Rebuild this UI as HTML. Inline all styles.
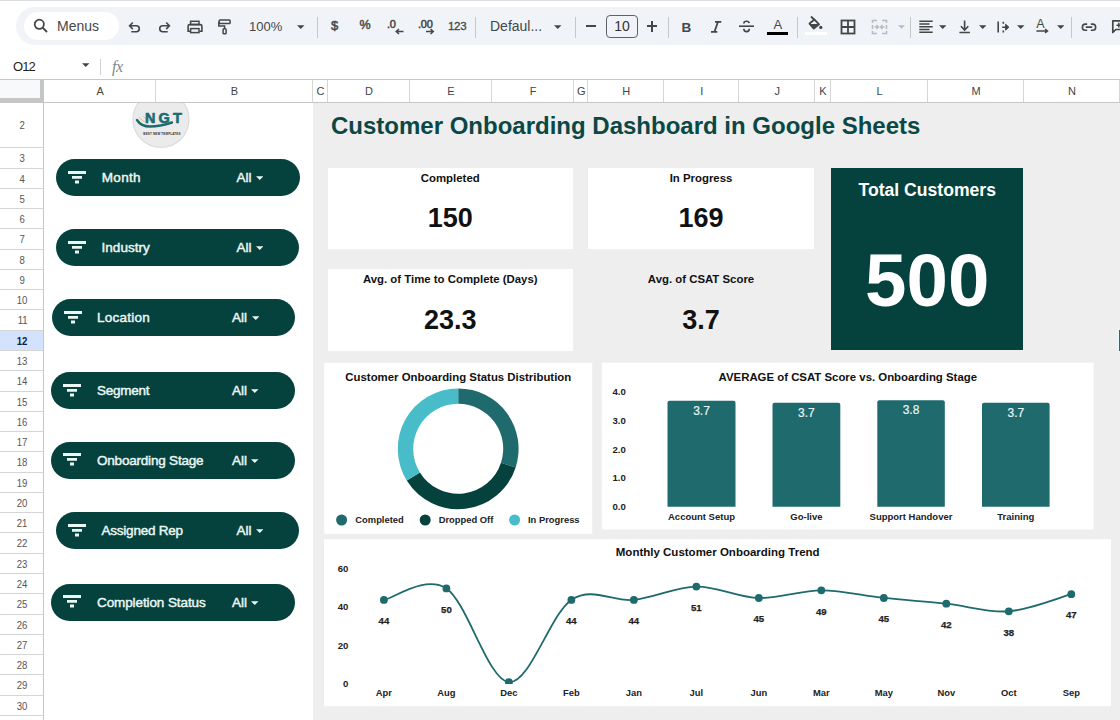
<!DOCTYPE html><html><head><meta charset="utf-8"><style>
*{box-sizing:border-box;margin:0;padding:0}
html,body{width:1120px;height:720px;overflow:hidden;background:#fff;font-family:"Liberation Sans",sans-serif;position:relative}
.a{position:absolute}
.t{position:absolute;white-space:nowrap;line-height:1}
.hdr{position:absolute;top:80px;height:22px;font-size:11px;color:#444;text-align:center;line-height:22px;border-right:1px solid #d6d6d6;padding-left:2px}
.rn{position:absolute;left:0;width:43px;font-size:11px;color:#555;text-align:center;padding-left:1.5px;border-bottom:1px solid #d5d5d5}
.pill{position:absolute;height:37px;width:243.5px;border-radius:18.5px;background:#05423e;color:#eaf7f3}
.pill .lab{position:absolute;font-size:13.5px;letter-spacing:-0.4px;line-height:1;white-space:nowrap;-webkit-text-stroke:0.45px #eaf7f3}
.card{position:absolute;background:#fff}
.kl{position:absolute;left:0;right:0;text-align:center;font-weight:bold;font-size:11.4px;color:#111;line-height:1}
.kv{position:absolute;left:0;right:0;text-align:center;font-weight:bold;font-size:27px;color:#111;line-height:1}
</style></head><body><div class="a" style="left:0;top:0;width:1120px;height:1px;background:#dadce0"></div>
<div class="a" style="left:16px;top:7px;width:1130px;height:38px;border-radius:19px;background:#f0f3f8"></div>
<div class="a" style="left:24px;top:12px;width:95px;height:28px;border-radius:14px;background:#fff"></div>
<svg class="a" style="left:33px;top:18px" width="16" height="16" viewBox="0 0 16 16"><circle cx="6.3" cy="6.3" r="4.6" fill="none" stroke="#444746" stroke-width="1.8"/><line x1="9.6" y1="9.6" x2="14" y2="14" stroke="#444746" stroke-width="1.9"/></svg>
<div class="t" style="left:57px;top:19px;font-size:14px;color:#444746">Menus</div>
<svg class="a" style="left:125px;top:18px" width="20" height="18" viewBox="125 18 20 18"><path d="M132.8 22.5 L129.6 25.8 L132.8 29.1 M129.8 25.8 H136.3 A2.95 2.95 0 0 1 136.3 31.7 H131.3" fill="none" stroke="#444746" stroke-width="1.6"/></svg>
<svg class="a" style="left:155px;top:18px" width="20" height="18" viewBox="155 18 20 18"><path d="M166.2 22.5 L169.4 25.8 L166.2 29.1 M169.2 25.8 H162.7 A2.95 2.95 0 0 0 162.7 31.7 H167.7" fill="none" stroke="#444746" stroke-width="1.6"/></svg>
<svg class="a" style="left:185px;top:18px" width="20" height="18" viewBox="185 18 20 18"><rect x="190.6" y="21.3" width="8.4" height="3.2" fill="none" stroke="#444746" stroke-width="1.5"/><path d="M190.2 31.2 H188.1 V26.2 Q188.1 24.6 189.7 24.6 H200.3 Q201.9 24.6 201.9 26.2 V31.2 H199.6" fill="none" stroke="#444746" stroke-width="1.6"/><rect x="190.6" y="28.6" width="8.4" height="4" fill="none" stroke="#444746" stroke-width="1.5"/></svg>
<svg class="a" style="left:215px;top:17px" width="18" height="20" viewBox="215 17 18 20"><rect x="219.2" y="19.9" width="10.9" height="3.6" rx="0.8" fill="none" stroke="#444746" stroke-width="1.5"/><path d="M218.8 21.7 V25.9 H224.6 V28.5" fill="none" stroke="#444746" stroke-width="1.5"/><rect x="223.1" y="28.8" width="3" height="5" rx="0.9" fill="none" stroke="#444746" stroke-width="1.5"/></svg>
<div class="t" style="left:249px;top:20px;font-size:13px;color:#444746">100%</div>
<svg class="a" style="left:297px;top:25px" width="7.5" height="4" viewBox="0 0 8 4"><path d="M0 0 H8 L4 4Z" fill="#444746"/></svg>
<div class="a" style="left:316.5px;top:17px;width:1px;height:21px;background:#c7c7c7"></div>
<div class="t" style="left:331px;top:18.5px;font-size:13px;-webkit-text-stroke:0.5px #444746;color:#444746">$</div>
<div class="t" style="left:359.5px;top:19px;font-size:12.5px;-webkit-text-stroke:0.45px #444746;color:#444746">%</div>
<div class="t" style="left:387px;top:19px;font-size:11px;-webkit-text-stroke:0.5px #444746;color:#444746;letter-spacing:-0.2px">.0</div>
<svg class="a" style="left:395px;top:28px" width="10" height="7" viewBox="0 0 10 7"><path d="M8.5 3.5 H1.5 M4 1 L1.2 3.5 L4 6" fill="none" stroke="#444746" stroke-width="1.5"/></svg>
<div class="t" style="left:418px;top:18.5px;font-size:11px;-webkit-text-stroke:0.5px #444746;color:#444746;letter-spacing:-0.2px">.00</div>
<svg class="a" style="left:424.5px;top:28px" width="10" height="7" viewBox="0 0 10 7"><path d="M1 3.5 H8 M5.5 1 L8.3 3.5 L5.5 6" fill="none" stroke="#444746" stroke-width="1.5"/></svg>
<div class="t" style="left:448px;top:20.5px;font-size:11.5px;-webkit-text-stroke:0.3px #444746;color:#444746;letter-spacing:-0.3px">123</div>
<div class="a" style="left:475px;top:17px;width:1px;height:21px;background:#c7c7c7"></div>
<div class="t" style="left:490px;top:19px;font-size:14px;color:#444746">Defaul...</div>
<svg class="a" style="left:554px;top:25px" width="7.5" height="4" viewBox="0 0 8 4"><path d="M0 0 H8 L4 4Z" fill="#444746"/></svg>
<div class="a" style="left:575px;top:17px;width:1px;height:21px;background:#c7c7c7"></div>
<div class="a" style="left:586px;top:25.3px;width:10px;height:2px;background:#444746"></div>
<div class="a" style="left:606px;top:15px;width:32px;height:22.5px;border:1px solid #5f6368;border-radius:4px;font-size:14px;color:#333;text-align:center;line-height:20.5px">10</div>
<div class="a" style="left:646.5px;top:25.3px;width:10.5px;height:2px;background:#444746"></div><div class="a" style="left:650.75px;top:20.5px;width:2px;height:11.5px;background:#444746"></div>
<div class="a" style="left:668px;top:17px;width:1px;height:21px;background:#c7c7c7"></div>
<div class="t" style="left:681.5px;top:20.5px;font-size:13.5px;font-weight:bold;color:#444746">B</div>
<svg class="a" style="left:709px;top:20px" width="14" height="14" viewBox="0 0 14 14"><path d="M6 1.8 H12.3 M2 11.8 H8.3 M9 1.8 L5.5 11.8" fill="none" stroke="#444746" stroke-width="1.8"/></svg>
<svg class="a" style="left:738px;top:20px" width="17" height="13" viewBox="0 0 17 13"><path d="M1 6.2 H16" stroke="#444746" stroke-width="1.6"/><path d="M11.2 3.2 Q11 1.2 8.5 1.2 Q5.8 1.2 5.8 3.4" fill="none" stroke="#444746" stroke-width="1.6"/><path d="M5.8 8.8 Q5.8 11.6 8.5 11.6 Q11.3 11.6 11.3 8.8" fill="none" stroke="#444746" stroke-width="1.6"/></svg>
<div class="t" style="left:773.5px;top:18px;font-size:13px;color:#444746">A</div>
<div class="a" style="left:767px;top:32px;width:21px;height:3px;background:#000"></div>
<div class="a" style="left:797px;top:17px;width:1px;height:21px;background:#c7c7c7"></div>
<svg class="a" style="left:805px;top:15px" width="20" height="16" viewBox="805 15 20 16"><path d="M809.5 23.6 L814.5 19.6 L819 24.3 L813.8 28.6 Z" fill="none" stroke="#444746" stroke-width="1.9" stroke-linejoin="round"/><path d="M810 24 H818.5 L813.8 28.2 Z" fill="#444746"/><path d="M811 16.5 L814.5 20" stroke="#444746" stroke-width="1.8"/><circle cx="820.8" cy="27.4" r="1.6" fill="#444746"/></svg>
<div class="a" style="left:805px;top:32px;width:22px;height:3px;background:#fff"></div>
<svg class="a" style="left:840px;top:19px" width="16" height="16" viewBox="0 0 16 16"><rect x="1.5" y="1.5" width="13" height="13" fill="none" stroke="#444746" stroke-width="1.8"/><path d="M8 1.5 V14.5 M1.5 8 H14.5" stroke="#444746" stroke-width="1.8"/></svg>
<svg class="a" style="left:871px;top:19px" width="17" height="16" viewBox="0 0 17 16"><path d="M1.5 4 V1.5 H6 M11 1.5 H15.5 V4 M1.5 12 V14.5 H6 M11 14.5 H15.5 V12 M1.5 6 V10 M15.5 6 V10" fill="none" stroke="#b9bcbf" stroke-width="1.6"/><path d="M3.5 8 H7 M5.5 6 L7.5 8 L5.5 10 M13.5 8 H10 M11.5 6 L9.5 8 L11.5 10" fill="none" stroke="#b9bcbf" stroke-width="1.4"/></svg>
<svg class="a" style="left:897.5px;top:25px" width="7" height="4" viewBox="0 0 8 4"><path d="M0 0 H8 L4 4Z" fill="#b9bcbf"/></svg>
<div class="a" style="left:909.5px;top:17px;width:1px;height:21px;background:#c7c7c7"></div>
<svg class="a" style="left:915px;top:18px" width="20" height="17" viewBox="915 18 20 17"><path d="M919.3 21.2 H932.7 M919.3 24 H929.5 M919.3 26.8 H932.7 M919.3 29.6 H929.5 M919.3 32.3 H932.7" stroke="#444746" stroke-width="1.5"/></svg>
<svg class="a" style="left:938.5px;top:25px" width="7.5" height="4" viewBox="0 0 8 4"><path d="M0 0 H8 L4 4Z" fill="#444746"/></svg>
<svg class="a" style="left:955px;top:18px" width="18" height="17" viewBox="955 18 18 17"><path d="M964.6 20.5 V30 M960.9 26.3 L964.6 30 L968.3 26.3 M959.4 32.5 H969.9" fill="none" stroke="#444746" stroke-width="1.6"/></svg>
<svg class="a" style="left:978.5px;top:25px" width="7.5" height="4" viewBox="0 0 8 4"><path d="M0 0 H8 L4 4Z" fill="#444746"/></svg>
<svg class="a" style="left:994px;top:18px" width="18" height="17" viewBox="994 18 18 17"><path d="M998.2 21.5 V32.6 M1003.3 21.8 V23.8 M1003.3 30.6 V32.6 M1002.2 27.2 H1008" fill="none" stroke="#444746" stroke-width="1.6"/><path d="M1005.6 24.2 L1008.9 27.2 L1005.6 30.2Z" fill="#444746" stroke="#444746" stroke-width="1"/></svg>
<svg class="a" style="left:1017px;top:25px" width="7.5" height="4" viewBox="0 0 8 4"><path d="M0 0 H8 L4 4Z" fill="#444746"/></svg>
<div class="t" style="left:1036.3px;top:18px;font-size:12.5px;color:#444746">A</div>
<svg class="a" style="left:1035px;top:28px" width="15" height="6" viewBox="1035 28 15 6"><path d="M1036.4 30.9 H1047 M1045 29 L1047.5 30.9 L1045 32.8" fill="none" stroke="#444746" stroke-width="1.5"/></svg>
<svg class="a" style="left:1056.5px;top:25px" width="7.5" height="4" viewBox="0 0 8 4"><path d="M0 0 H8 L4 4Z" fill="#444746"/></svg>
<div class="a" style="left:1071px;top:17px;width:1px;height:21px;background:#c7c7c7"></div>
<svg class="a" style="left:1079px;top:20px" width="20" height="14" viewBox="1079 20 20 14"><path d="M1087.2 24.1 H1085.4 A3.05 3.05 0 0 0 1085.4 30.2 H1087.2 M1090.8 24.1 H1092.6 A3.05 3.05 0 0 1 1092.6 30.2 H1090.8 M1085.8 27.15 H1092.2" fill="none" stroke="#444746" stroke-width="1.6"/></svg>
<svg class="a" style="left:1110px;top:18px" width="14" height="17" viewBox="1110 18 14 17"><path d="M1112.8 32.5 V20.8 H1126 V29.5 H1115.8 Z" fill="none" stroke="#444746" stroke-width="1.7" stroke-linejoin="round"/><path d="M1118.8 22.8 V27.5 M1116.5 25.15 H1121.1" stroke="#444746" stroke-width="1.5"/></svg>
<div class="t" style="left:13px;top:60px;font-size:13px;color:#1f1f1f;letter-spacing:-0.9px">O12</div>
<svg class="a" style="left:82px;top:63px" width="7.5" height="4" viewBox="0 0 8 4"><path d="M0 0 H8 L4 4Z" fill="#444"/></svg>
<div class="a" style="left:100px;top:59px;width:1px;height:16px;background:#d0d0d0"></div>
<div class="t" style="left:112px;top:59px;font-size:16px;font-style:italic;color:#80868b;letter-spacing:-0.5px;font-family:'Liberation Serif'">fx</div>
<div class="a" style="left:0;top:79px;width:1120px;height:1px;background:#c7c7c7"></div>
<div class="a" style="left:0;top:102px;width:1120px;height:1px;background:#c7c7c7"></div>
<div class="hdr" style="left:44px;width:111.5px">A</div>
<div class="hdr" style="left:155.5px;width:157.0px">B</div>
<div class="hdr" style="left:312.5px;width:15.0px">C</div>
<div class="hdr" style="left:327.5px;width:82.0px">D</div>
<div class="hdr" style="left:409.5px;width:82.0px">E</div>
<div class="hdr" style="left:491.5px;width:82.0px">F</div>
<div class="hdr" style="left:573.5px;width:14.5px">G</div>
<div class="hdr" style="left:588px;width:75.5px">H</div>
<div class="hdr" style="left:663.5px;width:75.5px">I</div>
<div class="hdr" style="left:739px;width:75.5px">J</div>
<div class="hdr" style="left:814.5px;width:16.0px">K</div>
<div class="hdr" style="left:830.5px;width:97.0px">L</div>
<div class="hdr" style="left:927.5px;width:96.0px">M</div>
<div class="hdr" style="left:1023.5px;width:96.0px">N</div>
<div class="hdr" style="left:1119.5px;width:80.5px">O</div>
<div class="a" style="left:0;top:80px;width:44px;height:22px;background:#f8f9fa;border-right:4px solid #c4c7c5;border-bottom:4px solid #c4c7c5"></div>
<div class="a" style="left:44px;top:103px;width:268.5px;height:620px;background:#fff"></div>
<div class="a" style="left:312.5px;top:103px;width:808px;height:620px;background:#eeeeee"></div>
<div class="a" style="left:43px;top:103px;width:1px;height:620px;background:#c7c7c7"></div>
<div class="rn" style="top:102.50px;height:45.80px;line-height:45.80px;"><span style="display:inline-block;transform:scaleX(0.87)">2</span></div>
<div class="rn" style="top:148.30px;height:20.27px;line-height:20.27px;"><span style="display:inline-block;transform:scaleX(0.87)">3</span></div>
<div class="rn" style="top:168.57px;height:20.27px;line-height:20.27px;"><span style="display:inline-block;transform:scaleX(0.87)">4</span></div>
<div class="rn" style="top:188.84px;height:20.27px;line-height:20.27px;"><span style="display:inline-block;transform:scaleX(0.87)">5</span></div>
<div class="rn" style="top:209.11px;height:20.27px;line-height:20.27px;"><span style="display:inline-block;transform:scaleX(0.87)">6</span></div>
<div class="rn" style="top:229.38px;height:20.27px;line-height:20.27px;"><span style="display:inline-block;transform:scaleX(0.87)">7</span></div>
<div class="rn" style="top:249.65px;height:20.27px;line-height:20.27px;"><span style="display:inline-block;transform:scaleX(0.87)">8</span></div>
<div class="rn" style="top:269.92px;height:20.27px;line-height:20.27px;"><span style="display:inline-block;transform:scaleX(0.87)">9</span></div>
<div class="rn" style="top:290.19px;height:20.27px;line-height:20.27px;"><span style="display:inline-block;transform:scaleX(0.87)">10</span></div>
<div class="rn" style="top:310.46px;height:20.27px;line-height:20.27px;"><span style="display:inline-block;transform:scaleX(0.87)">11</span></div>
<div class="rn" style="top:330.73px;height:20.27px;line-height:20.27px;background:#d3e3fd;color:#0b2147;font-weight:bold;"><span style="display:inline-block;transform:scaleX(0.87)">12</span></div>
<div class="rn" style="top:351.00px;height:20.27px;line-height:20.27px;"><span style="display:inline-block;transform:scaleX(0.87)">13</span></div>
<div class="rn" style="top:371.27px;height:20.27px;line-height:20.27px;"><span style="display:inline-block;transform:scaleX(0.87)">14</span></div>
<div class="rn" style="top:391.54px;height:20.27px;line-height:20.27px;"><span style="display:inline-block;transform:scaleX(0.87)">15</span></div>
<div class="rn" style="top:411.81px;height:20.27px;line-height:20.27px;"><span style="display:inline-block;transform:scaleX(0.87)">16</span></div>
<div class="rn" style="top:432.08px;height:20.27px;line-height:20.27px;"><span style="display:inline-block;transform:scaleX(0.87)">17</span></div>
<div class="rn" style="top:452.35px;height:20.27px;line-height:20.27px;"><span style="display:inline-block;transform:scaleX(0.87)">18</span></div>
<div class="rn" style="top:472.62px;height:20.27px;line-height:20.27px;"><span style="display:inline-block;transform:scaleX(0.87)">19</span></div>
<div class="rn" style="top:492.89px;height:20.27px;line-height:20.27px;"><span style="display:inline-block;transform:scaleX(0.87)">20</span></div>
<div class="rn" style="top:513.16px;height:20.27px;line-height:20.27px;"><span style="display:inline-block;transform:scaleX(0.87)">21</span></div>
<div class="rn" style="top:533.43px;height:20.27px;line-height:20.27px;"><span style="display:inline-block;transform:scaleX(0.87)">22</span></div>
<div class="rn" style="top:553.70px;height:20.27px;line-height:20.27px;"><span style="display:inline-block;transform:scaleX(0.87)">23</span></div>
<div class="rn" style="top:573.97px;height:20.27px;line-height:20.27px;"><span style="display:inline-block;transform:scaleX(0.87)">24</span></div>
<div class="rn" style="top:594.24px;height:20.27px;line-height:20.27px;"><span style="display:inline-block;transform:scaleX(0.87)">25</span></div>
<div class="rn" style="top:614.51px;height:20.27px;line-height:20.27px;"><span style="display:inline-block;transform:scaleX(0.87)">26</span></div>
<div class="rn" style="top:634.78px;height:20.27px;line-height:20.27px;"><span style="display:inline-block;transform:scaleX(0.87)">27</span></div>
<div class="rn" style="top:655.05px;height:20.27px;line-height:20.27px;"><span style="display:inline-block;transform:scaleX(0.87)">28</span></div>
<div class="rn" style="top:675.32px;height:20.27px;line-height:20.27px;"><span style="display:inline-block;transform:scaleX(0.87)">29</span></div>
<div class="rn" style="top:695.59px;height:20.27px;line-height:20.27px;"><span style="display:inline-block;transform:scaleX(0.87)">30</span></div>
<div class="rn" style="top:715.86px;height:20.27px;line-height:20.27px;"><span style="display:inline-block;transform:scaleX(0.87)">31</span></div>
<svg class="a" style="left:128px;top:103px" width="66" height="50" viewBox="128 103 66 50">
<circle cx="161" cy="119.5" r="28" fill="#ebebeb" stroke="#dcdcdc" stroke-width="1.2"/>
<path d="M137 120 Q141 126.5 150 126.5 Q160 126.5 172 122.5" fill="none" stroke="#1d6b70" stroke-width="2.4" stroke-linecap="round"/>
<path d="M139 117 Q142 122 148 123" fill="none" stroke="#e8b878" stroke-width="0.9"/><path d="M143 116 Q146 120 150 121" fill="none" stroke="#e8b878" stroke-width="0.7"/>
<text x="165" y="123" text-anchor="middle" font-family="Liberation Sans" font-weight="bold" font-size="14.5" fill="#1a6d73" stroke="#1a6d73" stroke-width="0.6" letter-spacing="3.2">NGT</text>
<text x="162" y="135" text-anchor="middle" font-family="Liberation Sans" font-weight="bold" font-size="3" fill="#333" letter-spacing="0.15">BEST NEW TEMPLATES</text>
</svg>
<div class="pill" style="left:56.2px;top:159.1px"><svg class="a" style="left:12px;top:11.5px" width="19" height="14" viewBox="0 0 19 14"><path d="M0 1.5 H18 M4 6.3 H14 M7 11 H11" stroke="#eaf7f3" stroke-width="2.8"/></svg><div class="lab" style="left:45.5px;top:12px;letter-spacing:0.35px">Month</div><div class="lab" style="left:180.2px;top:12px;letter-spacing:0px">All</div><svg class="a" style="left:199.7px;top:17.2px" width="7.5" height="4.2" viewBox="0 0 8 4"><path d="M0 0 H8 L4 4Z" fill="#eaf7f3"/></svg></div>
<div class="pill" style="left:55.8px;top:229.1px"><svg class="a" style="left:12px;top:11.5px" width="19" height="14" viewBox="0 0 19 14"><path d="M0 1.5 H18 M4 6.3 H14 M7 11 H11" stroke="#eaf7f3" stroke-width="2.8"/></svg><div class="lab" style="left:45.7px;top:12px;letter-spacing:0.05px">Industry</div><div class="lab" style="left:180.60000000000002px;top:12px;letter-spacing:0px">All</div><svg class="a" style="left:200.10000000000002px;top:17.2px" width="7.5" height="4.2" viewBox="0 0 8 4"><path d="M0 0 H8 L4 4Z" fill="#eaf7f3"/></svg></div>
<div class="pill" style="left:51.5px;top:299.1px"><svg class="a" style="left:12px;top:11.5px" width="19" height="14" viewBox="0 0 19 14"><path d="M0 1.5 H18 M4 6.3 H14 M7 11 H11" stroke="#eaf7f3" stroke-width="2.8"/></svg><div class="lab" style="left:45.5px;top:12px;letter-spacing:0.25px">Location</div><div class="lab" style="left:180.5px;top:12px;letter-spacing:0px">All</div><svg class="a" style="left:200.0px;top:17.2px" width="7.5" height="4.2" viewBox="0 0 8 4"><path d="M0 0 H8 L4 4Z" fill="#eaf7f3"/></svg></div>
<div class="pill" style="left:51.3px;top:372.2px"><svg class="a" style="left:12px;top:11.5px" width="19" height="14" viewBox="0 0 19 14"><path d="M0 1.5 H18 M4 6.3 H14 M7 11 H11" stroke="#eaf7f3" stroke-width="2.8"/></svg><div class="lab" style="left:45.7px;top:12px;letter-spacing:-0.25px">Segment</div><div class="lab" style="left:180.7px;top:12px;letter-spacing:0px">All</div><svg class="a" style="left:200.2px;top:17.2px" width="7.5" height="4.2" viewBox="0 0 8 4"><path d="M0 0 H8 L4 4Z" fill="#eaf7f3"/></svg></div>
<div class="pill" style="left:51.3px;top:441.8px"><svg class="a" style="left:12px;top:11.5px" width="19" height="14" viewBox="0 0 19 14"><path d="M0 1.5 H18 M4 6.3 H14 M7 11 H11" stroke="#eaf7f3" stroke-width="2.8"/></svg><div class="lab" style="left:45.7px;top:12px;letter-spacing:-0.2px">Onboarding Stage</div><div class="lab" style="left:180.7px;top:12px;letter-spacing:0px">All</div><svg class="a" style="left:200.2px;top:17.2px" width="7.5" height="4.2" viewBox="0 0 8 4"><path d="M0 0 H8 L4 4Z" fill="#eaf7f3"/></svg></div>
<div class="pill" style="left:55.8px;top:512.3px"><svg class="a" style="left:12px;top:11.5px" width="19" height="14" viewBox="0 0 19 14"><path d="M0 1.5 H18 M4 6.3 H14 M7 11 H11" stroke="#eaf7f3" stroke-width="2.8"/></svg><div class="lab" style="left:45.7px;top:12px;letter-spacing:-0.22px">Assigned Rep</div><div class="lab" style="left:180.60000000000002px;top:12px;letter-spacing:0px">All</div><svg class="a" style="left:200.10000000000002px;top:17.2px" width="7.5" height="4.2" viewBox="0 0 8 4"><path d="M0 0 H8 L4 4Z" fill="#eaf7f3"/></svg></div>
<div class="pill" style="left:51.3px;top:583.5px"><svg class="a" style="left:12px;top:11.5px" width="19" height="14" viewBox="0 0 19 14"><path d="M0 1.5 H18 M4 6.3 H14 M7 11 H11" stroke="#eaf7f3" stroke-width="2.8"/></svg><div class="lab" style="left:45.7px;top:12px;letter-spacing:-0.1px">Completion Status</div><div class="lab" style="left:180.7px;top:12px;letter-spacing:0px">All</div><svg class="a" style="left:200.2px;top:17.2px" width="7.5" height="4.2" viewBox="0 0 8 4"><path d="M0 0 H8 L4 4Z" fill="#eaf7f3"/></svg></div>
<div class="t" style="left:331px;top:114px;font-size:24px;font-weight:bold;color:#0b4845">Customer Onboarding Dashboard in Google Sheets</div>
<div class="card" style="left:327.5px;top:168px;width:245.5px;height:80.80000000000001px;background:#fff"><div class="kl" style="top:5px">Completed</div><div class="kv" style="top:37px">150</div></div>
<div class="card" style="left:588px;top:168px;width:226px;height:80.80000000000001px;background:#fff"><div class="kl" style="top:5px">In Progress</div><div class="kv" style="top:37px">169</div></div>
<div class="card" style="left:327.5px;top:269.2px;width:245.5px;height:81.69999999999999px;background:#fff"><div class="kl" style="top:5px">Avg. of Time to Complete (Days)</div><div class="kv" style="top:38px">23.3</div></div>
<div class="card" style="left:588px;top:269.2px;width:226px;height:81.69999999999999px;background:#eeeeee"><div class="kl" style="top:5px">Avg. of CSAT Score</div><div class="kv" style="top:38px">3.7</div></div>
<div class="card" style="left:830.5px;top:167.8px;width:192.5px;height:182.5px;background:#05423e"><div class="kl" style="top:14.5px;left:1px;font-size:17.6px;color:#fff">Total Customers</div><div class="kv" style="top:76px;left:1px;font-size:74.5px;color:#fff">500</div></div>
<svg class="a" style="left:0;top:0" width="1120" height="720" viewBox="0 0 1120 720" font-family="Liberation Sans"><rect x="324.2" y="362.8" width="268" height="171" fill="#fff"/><text x="458.3" y="381" text-anchor="middle" font-size="11.4" font-weight="bold" fill="#111">Customer Onboarding Status Distribution</text><path d="M458.20 388.40 A60.4 60.4 0 0 1 515.64 467.46 L501.00 462.71 A45 45 0 0 0 458.20 403.80Z" fill="#1e6a6c"/><path d="M515.64 467.46 A60.4 60.4 0 0 1 406.80 480.52 L419.91 472.43 A45 45 0 0 0 501.00 462.71Z" fill="#05423e"/><path d="M406.80 480.52 A60.4 60.4 0 0 1 458.20 388.40 L458.20 403.80 A45 45 0 0 0 419.91 472.43Z" fill="#48bcc8"/><circle cx="341.6" cy="520" r="5.5" fill="#1e6a6c"/><text x="355.3" y="522.9" font-size="9.4" font-weight="bold" fill="#222">Completed</text><circle cx="425.2" cy="520" r="5.5" fill="#05423e"/><text x="438.7" y="522.9" font-size="9.4" font-weight="bold" fill="#222">Dropped Off</text><circle cx="514.6" cy="520" r="5.5" fill="#48bcc8"/><text x="528" y="522.9" font-size="9.4" font-weight="bold" fill="#222">In Progress</text><rect x="601.8" y="362.7" width="491.8" height="166.7" fill="#fff"/><text x="847.8" y="381.4" text-anchor="middle" font-size="11.4" font-weight="bold" fill="#111">AVERAGE of CSAT Score vs. Onboarding Stage</text><text x="612.5" y="394.9" font-size="9.6" font-weight="bold" fill="#222">4.0</text><text x="612.5" y="423.7" font-size="9.6" font-weight="bold" fill="#222">3.0</text><text x="612.5" y="452.5" font-size="9.6" font-weight="bold" fill="#222">2.0</text><text x="612.5" y="481.3" font-size="9.6" font-weight="bold" fill="#222">1.0</text><text x="612.5" y="510.1" font-size="9.6" font-weight="bold" fill="#222">0.0</text><path d="M667.5 506.7 V402.7 Q667.5 400.7 669.5 400.7 H733.5 Q735.5 400.7 735.5 402.7 V506.7Z" fill="#1e6a6c"/><text x="701.5" y="414.5" text-anchor="middle" font-size="12" fill="#e8f4f3" stroke="#e8f4f3" stroke-width="0.2">3.7</text><text x="701.5" y="520" text-anchor="middle" font-size="9.5" font-weight="bold" fill="#222">Account Setup</text><path d="M772.5 506.7 V404.8 Q772.5 402.8 774.5 402.8 H838.3 Q840.3 402.8 840.3 404.8 V506.7Z" fill="#1e6a6c"/><text x="806.4" y="416.6" text-anchor="middle" font-size="12" fill="#e8f4f3" stroke="#e8f4f3" stroke-width="0.2">3.7</text><text x="806.4" y="520" text-anchor="middle" font-size="9.5" font-weight="bold" fill="#222">Go-live</text><path d="M877.3 506.7 V402.2 Q877.3 400.2 879.3 400.2 H942.8 Q944.8 400.2 944.8 402.2 V506.7Z" fill="#1e6a6c"/><text x="911.0" y="414.0" text-anchor="middle" font-size="12" fill="#e8f4f3" stroke="#e8f4f3" stroke-width="0.2">3.8</text><text x="911.0" y="520" text-anchor="middle" font-size="9.5" font-weight="bold" fill="#222">Support Handover</text><path d="M982 506.7 V404.8 Q982 402.8 984 402.8 H1047.6 Q1049.6 402.8 1049.6 404.8 V506.7Z" fill="#1e6a6c"/><text x="1015.8" y="416.6" text-anchor="middle" font-size="12" fill="#e8f4f3" stroke="#e8f4f3" stroke-width="0.2">3.7</text><text x="1015.8" y="520" text-anchor="middle" font-size="9.5" font-weight="bold" fill="#222">Training</text><rect x="324" y="539.2" width="787" height="167" fill="#fff"/><text x="717.7" y="556.3" text-anchor="middle" font-size="11.5" font-weight="bold" fill="#111">Monthly Customer Onboarding Trend</text><text x="348.4" y="571.7" text-anchor="end" font-size="9.6" font-weight="bold" fill="#222">60</text><text x="348.4" y="610.1" text-anchor="end" font-size="9.6" font-weight="bold" fill="#222">40</text><text x="348.4" y="648.6" text-anchor="end" font-size="9.6" font-weight="bold" fill="#222">20</text><text x="348.4" y="687.0" text-anchor="end" font-size="9.6" font-weight="bold" fill="#222">0</text><clipPath id="lc"><rect x="324" y="540" width="787" height="144"/></clipPath><g clip-path="url(#lc)"><path d="M383.90 599.88 C394.31 597.98 425.56 574.73 446.39 588.45 C467.22 602.17 488.05 680.27 508.88 682.18 C529.71 684.08 550.54 613.60 571.37 599.88 C592.20 586.16 613.03 602.10 633.86 599.88 C654.69 597.66 675.52 586.86 696.35 586.55 C717.18 586.23 738.01 597.34 758.84 597.98 C779.67 598.61 800.50 590.36 821.33 590.36 C842.16 590.36 862.99 595.75 883.82 597.98 C904.65 600.20 925.48 601.47 946.31 603.69 C967.14 605.91 987.97 612.90 1008.80 611.31 C1029.63 609.72 1060.88 597.02 1071.29 594.17" fill="none" stroke="#1e6a6c" stroke-width="1.8"/><circle cx="383.90" cy="599.88" r="3.9" fill="#1e6a6c"/><circle cx="446.39" cy="588.45" r="3.9" fill="#1e6a6c"/><circle cx="508.88" cy="682.18" r="3.9" fill="#1e6a6c"/><circle cx="571.37" cy="599.88" r="3.9" fill="#1e6a6c"/><circle cx="633.86" cy="599.88" r="3.9" fill="#1e6a6c"/><circle cx="696.35" cy="586.55" r="3.9" fill="#1e6a6c"/><circle cx="758.84" cy="597.98" r="3.9" fill="#1e6a6c"/><circle cx="821.33" cy="590.36" r="3.9" fill="#1e6a6c"/><circle cx="883.82" cy="597.98" r="3.9" fill="#1e6a6c"/><circle cx="946.31" cy="603.69" r="3.9" fill="#1e6a6c"/><circle cx="1008.80" cy="611.31" r="3.9" fill="#1e6a6c"/><circle cx="1071.29" cy="594.17" r="3.9" fill="#1e6a6c"/></g><text x="383.90" y="624.1" text-anchor="middle" font-size="9.6" font-weight="bold" fill="#222" stroke="#222" stroke-width="0.25">44</text><text x="383.90" y="696.3" text-anchor="middle" font-size="9.4" font-weight="bold" fill="#222">Apr</text><text x="446.39" y="612.7" text-anchor="middle" font-size="9.6" font-weight="bold" fill="#222" stroke="#222" stroke-width="0.25">50</text><text x="446.39" y="696.3" text-anchor="middle" font-size="9.4" font-weight="bold" fill="#222">Aug</text><text x="508.88" y="696.3" text-anchor="middle" font-size="9.4" font-weight="bold" fill="#222">Dec</text><text x="571.37" y="624.1" text-anchor="middle" font-size="9.6" font-weight="bold" fill="#222" stroke="#222" stroke-width="0.25">44</text><text x="571.37" y="696.3" text-anchor="middle" font-size="9.4" font-weight="bold" fill="#222">Feb</text><text x="633.86" y="624.1" text-anchor="middle" font-size="9.6" font-weight="bold" fill="#222" stroke="#222" stroke-width="0.25">44</text><text x="633.86" y="696.3" text-anchor="middle" font-size="9.4" font-weight="bold" fill="#222">Jan</text><text x="696.35" y="610.7" text-anchor="middle" font-size="9.6" font-weight="bold" fill="#222" stroke="#222" stroke-width="0.25">51</text><text x="696.35" y="696.3" text-anchor="middle" font-size="9.4" font-weight="bold" fill="#222">Jul</text><text x="758.84" y="622.2" text-anchor="middle" font-size="9.6" font-weight="bold" fill="#222" stroke="#222" stroke-width="0.25">45</text><text x="758.84" y="696.3" text-anchor="middle" font-size="9.4" font-weight="bold" fill="#222">Jun</text><text x="821.33" y="614.6" text-anchor="middle" font-size="9.6" font-weight="bold" fill="#222" stroke="#222" stroke-width="0.25">49</text><text x="821.33" y="696.3" text-anchor="middle" font-size="9.4" font-weight="bold" fill="#222">Mar</text><text x="883.82" y="622.2" text-anchor="middle" font-size="9.6" font-weight="bold" fill="#222" stroke="#222" stroke-width="0.25">45</text><text x="883.82" y="696.3" text-anchor="middle" font-size="9.4" font-weight="bold" fill="#222">May</text><text x="946.31" y="627.9" text-anchor="middle" font-size="9.6" font-weight="bold" fill="#222" stroke="#222" stroke-width="0.25">42</text><text x="946.31" y="696.3" text-anchor="middle" font-size="9.4" font-weight="bold" fill="#222">Nov</text><text x="1008.80" y="635.5" text-anchor="middle" font-size="9.6" font-weight="bold" fill="#222" stroke="#222" stroke-width="0.25">38</text><text x="1008.80" y="696.3" text-anchor="middle" font-size="9.4" font-weight="bold" fill="#222">Oct</text><text x="1071.29" y="618.4" text-anchor="middle" font-size="9.6" font-weight="bold" fill="#222" stroke="#222" stroke-width="0.25">47</text><text x="1071.29" y="696.3" text-anchor="middle" font-size="9.4" font-weight="bold" fill="#222">Sep</text></svg>
<div class="a" style="left:1117px;top:329px;width:3px;height:23px;background:#e6f4fb"></div><div class="a" style="left:1118.8px;top:330px;width:1.5px;height:21px;background:#3f5d7a"></div></body></html>
